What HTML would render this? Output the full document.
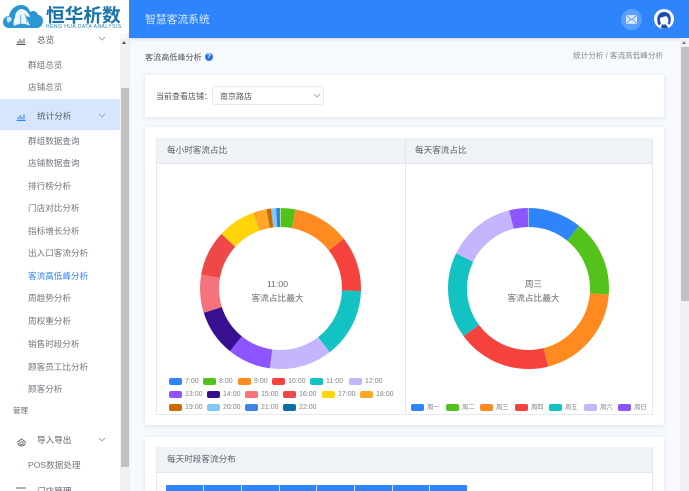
<!DOCTYPE html>
<html lang="zh"><head><meta charset="utf-8"><style>
html,body{margin:0;padding:0;width:689px;height:491px;overflow:hidden}
#p{position:relative;width:689px;height:491px;overflow:hidden;background:#f6f9fd;font-family:"Liberation Sans","Noto Sans CJK SC",sans-serif;color:#606266;filter:blur(.3px)}
.a{position:absolute;white-space:nowrap}
.s{position:absolute;white-space:nowrap;left:28px;font-size:8.6px;line-height:14px;color:#71767e}
.m{position:absolute;white-space:nowrap;left:37px;font-size:8.6px;line-height:14px;color:#5c6068}
.t{position:absolute;white-space:nowrap;font-size:8.6px;line-height:14px;color:#5c6068}
.card{position:absolute;background:#fff;box-shadow:0 1px 5px rgba(60,80,110,.12)}
.box{position:absolute;box-sizing:border-box;border:1px solid #e6e9ee;background:#fff}
.hd{position:absolute;background:#eff2f6;border-bottom:1px solid #e3e6ea;box-sizing:border-box}
.leg{position:absolute;font-size:7px;line-height:10px;color:#80848b;white-space:nowrap}
.leg i{position:absolute;left:0;top:1px;width:13px;height:7px;border-radius:2px}
.leg span{position:absolute;left:16px;top:0}
.z{font-size:6.3px}
.c{position:absolute;white-space:nowrap;width:181px;text-align:center;font-size:8.7px;line-height:14px;color:#666a72}
.d{position:absolute;top:485px;width:1px;height:6px;background:#cfe1fb}
</style></head><body><div id="p">

<!-- main header -->
<div class="a" style="left:129px;top:0;width:560px;height:38px;background:#2d84fb;box-shadow:0 1px 3px rgba(0,0,0,.15)"></div>
<div class="a" style="left:145px;top:12px;font-size:10.8px;line-height:16px;color:#dbe9ff">智慧客流系统</div>
<div class="a" style="left:621px;top:9px;width:21px;height:21px;border-radius:50%;background:#5a9ffb"></div>
<svg class="a" style="left:626px;top:15px" width="11" height="9" viewBox="0 0 11 9"><rect x=".5" y=".5" width="10" height="8" rx="1" fill="#d9e9ff" stroke="#fff" stroke-width=".6"/><path d="M1 1l4.500 4 4.500-4M1 8l3-3.500M10 8L7 4.500" fill="none" stroke="#5a9ffb" stroke-width=".9"/></svg>
<svg class="a" style="left:654px;top:9px" width="20" height="20" viewBox="0 0 20 20"><circle cx="10" cy="10" r="10" fill="#fff"/><path d="M4 15C2 9 4 3 10 3s8 5 6 12c-1 1-2 0-2-1 1-3 0-6-2-7-2 1-4 1-6 2 0 2 0 4 1 5l-1 2c-1 0-2 0-2-1z" fill="#1d4fb0"/><path d="M7 19l1-4 2 1 1-1 2 2 1 2c-2 1-5 1-7 0z" fill="#1d4fb0"/></svg>

<!-- sidebar -->
<div class="a" style="left:0;top:0;width:120px;height:491px;background:#fff"></div>
<div class="a" style="left:0;top:99px;width:120px;height:31px;background:#d6e6fe"></div>
<div class="a" style="left:120px;top:38px;width:9px;height:453px;background:#f1f1f1"></div>
<div class="a" style="left:121px;top:88px;width:8px;height:379px;background:#c1c1c1"></div>
<div class="a" style="left:122px;top:41px;width:0;height:0;border-left:2.500px solid transparent;border-right:2.500px solid transparent;border-bottom:3px solid #555"></div>
<div class="a" style="left:129px;top:38px;width:1px;height:453px;background:#e9edf3"></div>

<!-- logo -->
<div class="a" style="left:0;top:0;width:129px;height:33px;background:#fff"></div>
<svg class="a" style="left:2px;top:4px" width="42" height="25" viewBox="0 0 42 25"><path d="M7 24C3 24 1 21 1 18c0-3 2-6 6-6 1-6 6-11 12-11 5 0 8 3 9 7 3-2 7-1 8 3 3 0 5 3 5 6 0 4-3 7-6 7z" fill="#2a97d4"/><path d="M12 22c-1-3 0-6 1-9 0-4 3-8 7-8 4 1 7 4 8 8-2 0-3-1-4-1 1 4 3 7 4 10-5-3-11-3-16 0z" fill="#eef7fc"/><path d="M5 13c2-1 4 0 5 2-1 2-2 3-4 4-1-2-2-4-1-6z" fill="#cbe7f5"/><path d="M18 11c1 3 1 6 0 9M23 10c1 3 2 6 2 9" stroke="#63b4e0" stroke-width="1" fill="none"/></svg>
<div class="a" style="left:46px;top:5px;font-size:18.700px;line-height:22px;font-weight:bold;color:#1673ad">恒华析数</div>
<div class="a" style="left:46px;top:24px;font-size:5px;line-height:6px;letter-spacing:.48px;color:#2b7fb3">HENG HUA DATA ANALYSIS</div>

<!-- menu -->
<svg class="a" style="left:16px;top:36px" width="10" height="9" viewBox="0 0 10 9"><path d="M.5 8.500h9M2 7.500V5M4 7.500V3M6 7.500V4.500M8 7.500V2.500" stroke="#555" stroke-width="1" fill="none"/></svg>
<div class="m" style="top:33px">总览</div>
<svg class="a" style="left:98px;top:36px" width="8" height="5" viewBox="0 0 8 5"><path d="M1 1l3 3 3-3" stroke="#aaa" fill="none"/></svg>
<div class="s" style="top:58px">群组总览</div>
<div class="s" style="top:80px">店铺总览</div>
<svg class="a" style="left:16px;top:112px" width="10" height="9" viewBox="0 0 10 9"><path d="M.5 8.500h9M2 7.500V5M4 7.500V3M6 7.500V4.500M8 7.500V2.500" stroke="#2d84fb" stroke-width="1" fill="none"/></svg>
<div class="m" style="top:109px">统计分析</div>
<svg class="a" style="left:98px;top:113px" width="8" height="5" viewBox="0 0 8 5"><path d="M1 1l3 3 3-3" stroke="#a5b5cc" fill="none"/></svg>
<div class="s" style="top:134px">群组数据查询</div>
<div class="s" style="top:156px">店铺数据查询</div>
<div class="s" style="top:179px">排行榜分析</div>
<div class="s" style="top:201px">门店对比分析</div>
<div class="s" style="top:224px">指标增长分析</div>
<div class="s" style="top:246px">出入口客流分析</div>
<div class="s" style="top:269px;color:#2d84fb">客流高低峰分析</div>
<div class="s" style="top:291px">周趋势分析</div>
<div class="s" style="top:314px">周权重分析</div>
<div class="s" style="top:337px">销售时段分析</div>
<div class="s" style="top:360px">顾客员工比分析</div>
<div class="s" style="top:382px">顾客分析</div>
<div class="a" style="left:13px;top:405px;font-size:7.500px;line-height:12px;color:#666">管理</div>
<svg class="a" style="left:16px;top:436px" width="11" height="11" viewBox="0 0 11 11"><path d="M1 6.500L5.500 3 10 6.500M2 7c0 2 1.500 3 3.500 3S9 9 9 7" stroke="#666" fill="none" stroke-width=".9"/><rect x="4" y="6" width="3" height="2.500" stroke="#666" fill="none" stroke-width=".8"/></svg>
<div class="m" style="top:433px">导入导出</div>
<svg class="a" style="left:98px;top:437px" width="8" height="5" viewBox="0 0 8 5"><path d="M1 1l3 3 3-3" stroke="#aaa" fill="none"/></svg>
<div class="s" style="top:458px">POS数据处理</div>
<div class="m" style="top:484px">门店管理</div>
<svg class="a" style="left:16px;top:487px" width="10" height="4" viewBox="0 0 10 4"><path d="M0 1h10" stroke="#666"/></svg>

<!-- page title -->
<div class="a" style="left:145px;top:51px;font-size:8.100px;line-height:13px;color:#555">客流高低峰分析</div>
<div class="a" style="left:205px;top:53px;width:8px;height:8px;border-radius:50%;background:#2d78e0;color:#fff;font-size:6.500px;line-height:8px;text-align:center;font-weight:bold">?</div>
<div class="a" style="right:26px;top:50px;font-size:7.600px;line-height:12px;color:#888">统计分析 / 客流高低峰分析</div>

<!-- store selector -->
<div class="card" style="left:145px;top:75px;width:519px;height:42px"></div>
<div class="a" style="left:156px;top:90px;font-size:8px;line-height:13px;color:#555">当前查看店铺：</div>
<div class="a" style="left:212px;top:86px;width:112px;height:19px;box-sizing:border-box;border:1px solid #e8eaee;border-radius:3px;background:#fff"></div>
<div class="a" style="left:220px;top:90px;font-size:8px;line-height:13px;color:#555">南京路店</div>
<svg class="a" style="left:313px;top:93px" width="8" height="5" viewBox="0 0 8 5"><path d="M1 1l3 3 3-3" stroke="#aaa" fill="none"/></svg>

<!-- charts card -->
<div class="card" style="left:145px;top:127px;width:519px;height:298px"></div>
<div class="box" style="left:156px;top:138px;width:497px;height:277px"></div>
<div class="hd" style="left:157px;top:138px;width:495px;height:26px"></div>
<div class="a" style="left:405px;top:139px;width:1px;height:275px;background:#e3e6ea"></div>
<div class="t" style="left:167px;top:143px">每小时客流占比</div>
<div class="t" style="left:415px;top:143px">每天客流占比</div>

<svg class="a" style="left:190px;top:198px" width="181" height="181" viewBox="0 0 181 181">
<g fill="none" stroke-width="19" transform="rotate(-90 90.500 90.500)">
<circle cx="90.500" cy="90.500" r="71" pathLength="360" stroke="#53c31b" stroke-dasharray="10.700 360" stroke-dashoffset="0"/>
<circle cx="90.500" cy="90.500" r="71" pathLength="360" stroke="#ff8b20" stroke-dasharray="41.200 360" stroke-dashoffset="-10.700"/>
<circle cx="90.500" cy="90.500" r="71" pathLength="360" stroke="#f5423c" stroke-dasharray="40.100 360" stroke-dashoffset="-51.900"/>
<circle cx="90.500" cy="90.500" r="71" pathLength="360" stroke="#13c2c2" stroke-dasharray="50.500 360" stroke-dashoffset="-92"/>
<circle cx="90.500" cy="90.500" r="71" pathLength="360" stroke="#c5b5ff" stroke-dasharray="45.400 360" stroke-dashoffset="-142.500"/>
<circle cx="90.500" cy="90.500" r="71" pathLength="360" stroke="#8c55ff" stroke-dasharray="31.300 360" stroke-dashoffset="-187.900"/>
<circle cx="90.500" cy="90.500" r="71" pathLength="360" stroke="#36108f" stroke-dasharray="33.600 360" stroke-dashoffset="-219.200"/>
<circle cx="90.500" cy="90.500" r="71" pathLength="360" stroke="#f5737b" stroke-dasharray="27.500 360" stroke-dashoffset="-252.800"/>
<circle cx="90.500" cy="90.500" r="71" pathLength="360" stroke="#ee4848" stroke-dasharray="32.800 360" stroke-dashoffset="-280.300"/>
<circle cx="90.500" cy="90.500" r="71" pathLength="360" stroke="#ffd40a" stroke-dasharray="27.400 360" stroke-dashoffset="-313.100"/>
<circle cx="90.500" cy="90.500" r="71" pathLength="360" stroke="#ffa528" stroke-dasharray="9.900 360" stroke-dashoffset="-340.500"/>
<circle cx="90.500" cy="90.500" r="71" pathLength="360" stroke="#cc6a00" stroke-dasharray="3.300 360" stroke-dashoffset="-350.400"/>
<circle cx="90.500" cy="90.500" r="71" pathLength="360" stroke="#7fc8f8" stroke-dasharray="3.600 360" stroke-dashoffset="-353.700"/>
<circle cx="90.500" cy="90.500" r="71" pathLength="360" stroke="#2d7fe0" stroke-dasharray="2.700 360" stroke-dashoffset="-357.300"/>
</g></svg>
<div class="c" style="left:187px;top:277px">11:00</div>
<div class="c" style="left:187px;top:291px">客流占比最大</div>

<svg class="a" style="left:438px;top:198px" width="181" height="181" viewBox="0 0 181 181">
<g fill="none" stroke-width="19" transform="rotate(-90 90.500 90.500)">
<circle cx="90.500" cy="90.500" r="71" pathLength="360" stroke="#2d84fb" stroke-dasharray="38.900 360" stroke-dashoffset="0"/>
<circle cx="90.500" cy="90.500" r="71" pathLength="360" stroke="#53c31b" stroke-dasharray="55.600 360" stroke-dashoffset="-38.900"/>
<circle cx="90.500" cy="90.500" r="71" pathLength="360" stroke="#ff8b20" stroke-dasharray="71.600 360" stroke-dashoffset="-94.500"/>
<circle cx="90.500" cy="90.500" r="71" pathLength="360" stroke="#f5423c" stroke-dasharray="67.900 360" stroke-dashoffset="-166.100"/>
<circle cx="90.500" cy="90.500" r="71" pathLength="360" stroke="#13c2c2" stroke-dasharray="62.200 360" stroke-dashoffset="-234"/>
<circle cx="90.500" cy="90.500" r="71" pathLength="360" stroke="#c5b5ff" stroke-dasharray="50.300 360" stroke-dashoffset="-296.200"/>
<circle cx="90.500" cy="90.500" r="71" pathLength="360" stroke="#8c55ff" stroke-dasharray="13.500 360" stroke-dashoffset="-346.500"/>
</g></svg>
<div class="c" style="left:443px;top:277px">周三</div>
<div class="c" style="left:443px;top:291px">客流占比最大</div>

<!-- legend left -->
<div class="leg" style="left:169px;top:377px"><i style="background:#2d84fb"></i><span>7:00</span></div>
<div class="leg" style="left:203px;top:377px"><i style="background:#53c31b"></i><span>8:00</span></div>
<div class="leg" style="left:238px;top:377px"><i style="background:#ff8b20"></i><span>9:00</span></div>
<div class="leg" style="left:272px;top:377px"><i style="background:#f5423c"></i><span>10:00</span></div>
<div class="leg" style="left:310px;top:377px"><i style="background:#13c2c2"></i><span>11:00</span></div>
<div class="leg" style="left:349px;top:377px"><i style="background:#c5b5ff"></i><span>12:00</span></div>
<div class="leg" style="left:169px;top:390px"><i style="background:#8c55ff"></i><span>13:00</span></div>
<div class="leg" style="left:207px;top:390px"><i style="background:#36108f"></i><span>14:00</span></div>
<div class="leg" style="left:245px;top:390px"><i style="background:#f5737b"></i><span>15:00</span></div>
<div class="leg" style="left:283px;top:390px"><i style="background:#ee4848"></i><span>16:00</span></div>
<div class="leg" style="left:322px;top:390px"><i style="background:#ffd40a"></i><span>17:00</span></div>
<div class="leg" style="left:360px;top:390px"><i style="background:#ffa528"></i><span>18:00</span></div>
<div class="leg" style="left:169px;top:403px"><i style="background:#cc6a00"></i><span>19:00</span></div>
<div class="leg" style="left:207px;top:403px"><i style="background:#7fc8f8"></i><span>20:00</span></div>
<div class="leg" style="left:245px;top:403px"><i style="background:#3f86e4"></i><span>21:00</span></div>
<div class="leg" style="left:283px;top:403px"><i style="background:#0a6fa5"></i><span>22:00</span></div>

<!-- legend right -->
<div class="leg z" style="left:411px;top:403px"><i style="background:#2d84fb"></i><span>周一</span></div>
<div class="leg z" style="left:446px;top:403px"><i style="background:#53c31b"></i><span>周二</span></div>
<div class="leg z" style="left:480px;top:403px"><i style="background:#ff8b20"></i><span>周三</span></div>
<div class="leg z" style="left:515px;top:403px"><i style="background:#f5423c"></i><span>周四</span></div>
<div class="leg z" style="left:549px;top:403px"><i style="background:#13c2c2"></i><span>周五</span></div>
<div class="leg z" style="left:584px;top:403px"><i style="background:#c5b5ff"></i><span>周六</span></div>
<div class="leg z" style="left:618px;top:403px"><i style="background:#8c55ff"></i><span>周日</span></div>

<!-- third card -->
<div class="card" style="left:145px;top:437px;width:519px;height:54px"></div>
<div class="box" style="left:156px;top:447px;width:497px;height:44px;border-bottom:0"></div>
<div class="hd" style="left:157px;top:447px;width:495px;height:26px"></div>
<div class="t" style="left:167px;top:452px">每天时段客流分布</div>
<div class="a" style="left:166px;top:485px;width:301px;height:6px;background:#2d84fb;border-radius:1px 1px 0 0"></div>
<div class="d" style="left:203px"></div>
<div class="d" style="left:241px"></div>
<div class="d" style="left:279px"></div>
<div class="d" style="left:316px"></div>
<div class="d" style="left:354px"></div>
<div class="d" style="left:392px"></div>
<div class="d" style="left:429px"></div>

<!-- page scrollbar -->
<div class="a" style="left:680px;top:38px;width:9px;height:453px;background:#f1f1f1"></div>
<div class="a" style="left:681px;top:47px;width:8px;height:254px;background:#c1c1c1"></div>
<div class="a" style="left:682px;top:41px;width:0;height:0;border-left:2.500px solid transparent;border-right:2.500px solid transparent;border-bottom:3px solid #777"></div>
</div></body></html>
